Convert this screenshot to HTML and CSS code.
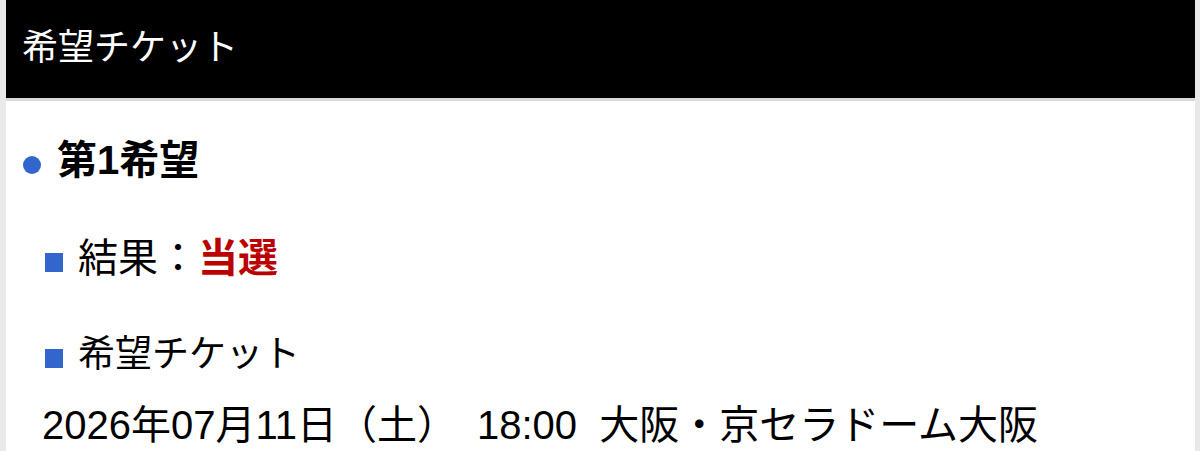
FILE: index.html
```html
<!DOCTYPE html>
<html lang="ja">
<head>
    <meta charset="UTF-8">
    <meta name="viewport" content="width=device-width, initial-scale=1.0">
    <title>希望チケット</title>
    <link rel="stylesheet" href="styles.css">
</head>
<body>
    <div class="page">
        <div class="titulo">希望チケット</div>

        <div class="contenido">
            <h3 class="kibou"><span class="punto"></span>第1希望</h3>

            <p class="fila"><span class="cuadro"></span>結果：<span class="tousen">当選</span></p>

            <p class="fila fila-ticket"><span class="cuadro"></span>希望チケット</p>

            <p class="fecha">2026年07月11日（土）　18:00&nbsp;&nbsp;大阪・京セラドーム大阪</p>
        </div>
    </div>
</body>
</html>
```

FILE: styles.css
```css
body {
    margin: 0;
    padding: 0;
    background-color: #e9e9e9;
    font-family: "Liberation Sans", "Noto Sans CJK JP", sans-serif;
    color: #000;
}

.page {
    margin: 0 5px 0 6px;
    background-color: #ffffff;
    min-height: 451px;
}

.titulo {
    background-color: #000;
    color: #fff;
    height: 98px;
    line-height: 96px;
    padding-left: 16px;
    font-size: 36px;
    border-bottom: 3px solid #d9d9d9;
}

.contenido {
    padding: 28px 0 0 0;
}

.kibou {
    display: flex;
    align-items: center;
    height: 56px;
    margin: 0;
    font-size: 40px;
    font-weight: bold;
}

.punto {
    width: 18px;
    height: 18px;
    border-radius: 50%;
    background-color: #3366cc;
    margin-left: 17px;
    margin-right: 16px;
    margin-top: 16px;
}

.fila {
    display: flex;
    align-items: center;
    height: 56px;
    margin: 42px 0 0 0;
    font-size: 40px;
}

.fila-ticket {
    margin-top: 40px;
    font-size: 37px;
}

.cuadro {
    width: 18px;
    height: 19px;
    background-color: #3366cc;
    margin-left: 39px;
    margin-right: 15px;
    margin-top: 15px;
}

.tousen {
    color: #bb0000;
    font-weight: bold;
}

.fecha {
    margin: 21px 0 0 36px;
    height: 50px;
    line-height: 50px;
    font-size: 40px;
    white-space: nowrap;
}
```
